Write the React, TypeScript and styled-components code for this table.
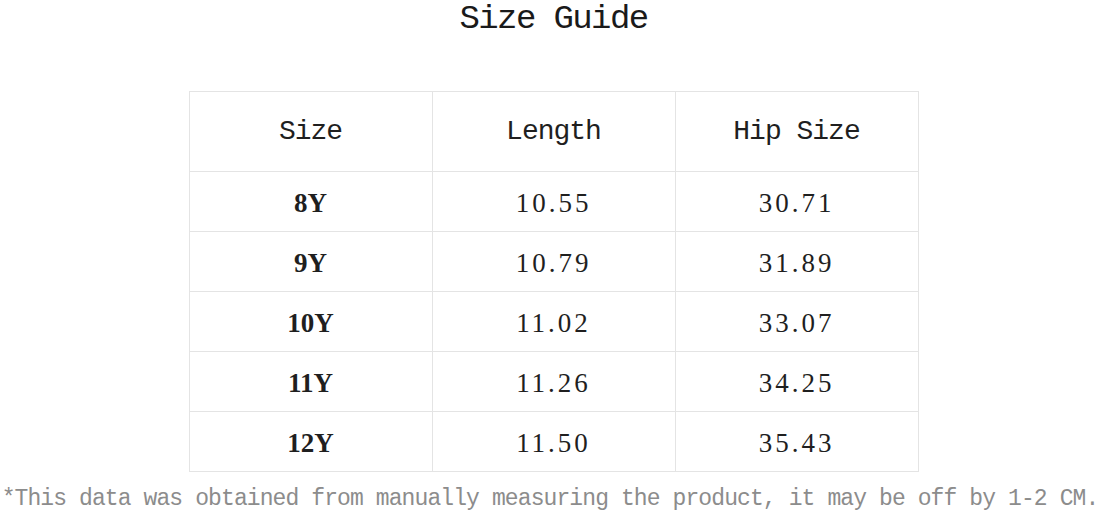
import React from "react";
import styled, { createGlobalStyle } from "styled-components";

const GlobalStyle = createGlobalStyle`
  html, body {
    margin: 0;
    padding: 0;
    background: #ffffff;
  }
  body {
    font-family: "Liberation Mono", "DejaVu Sans Mono", monospace;
    color: #1f1f1f;
  }
`;

const Page = styled.div`
  width: 1100px;
  height: 513px;
  overflow: hidden;
  display: flex;
  flex-direction: column;
  align-items: center;
`;

const Shifted = styled.div`
  display: flex;
  flex-direction: column;
  align-items: center;
  margin-left: 7px;
`;

const Title = styled.h1`
  margin: 0 0 53px;
  font-family: "Liberation Mono", monospace;
  font-weight: normal;
  font-size: 34px;
  line-height: 38px;
  letter-spacing: -1.6px;
  color: #1a1a1a;
`;

const Grid = styled.div`
  display: grid;
  grid-template-columns: repeat(3, 243px);
  border-top: 1px solid #e4e4e4;
  border-left: 1px solid #e4e4e4;
`;

const Cell = styled.div<{ $head?: boolean; $bold?: boolean }>`
  height: ${({ $head }) => ($head ? "79px" : "55px")};
  padding-top: ${({ $head }) => ($head ? "0" : "4px")};
  display: flex;
  align-items: center;
  justify-content: center;
  border-right: 1px solid #e4e4e4;
  border-bottom: 1px solid #e4e4e4;
  box-sizing: content-box;
  font-family: ${({ $head }) =>
    $head ? '"Liberation Mono", monospace' : '"Liberation Serif", serif'};
  font-size: ${({ $head }) => ($head ? "28px" : "27px")};
  font-weight: ${({ $bold }) => ($bold ? "bold" : "normal")};
  letter-spacing: ${({ $head, $bold }) =>
    $head ? "-1px" : $bold ? "0" : "3px"};
  color: #1f1f1f;
`;

const Note = styled.p`
  margin: 14px 0 0;
  white-space: nowrap;
  font-family: "Liberation Mono", monospace;
  font-size: 23px;
  line-height: 26px;
  letter-spacing: -0.9px;
  color: #8c8c8c;
`;

const rows = [
  ["8Y", "10.55", "30.71"],
  ["9Y", "10.79", "31.89"],
  ["10Y", "11.02", "33.07"],
  ["11Y", "11.26", "34.25"],
  ["12Y", "11.50", "35.43"],
];

export default function App() {
  return (
    <>
      <GlobalStyle />
      <Page>
        <Shifted>
          <Title>Size Guide</Title>
          <Grid>
            <Cell $head>Size</Cell>
            <Cell $head>Length</Cell>
            <Cell $head>Hip Size</Cell>
            {rows.map((r) => (
              <React.Fragment key={r[0]}>
                <Cell $bold>{r[0]}</Cell>
                <Cell>{r[1]}</Cell>
                <Cell>{r[2]}</Cell>
              </React.Fragment>
            ))}
          </Grid>
        </Shifted>
        <Note>
          *This data was obtained from manually measuring the product, it may be
          off by 1-2 CM.
        </Note>
      </Page>
    </>
  );
}
